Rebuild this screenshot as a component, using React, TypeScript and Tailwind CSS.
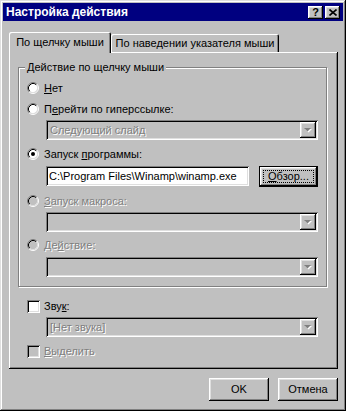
import React from 'react';

const RAISED =
  'shadow-[inset_-1px_-1px_0_#000,inset_1px_1px_0_#fff,inset_-2px_-2px_0_#808080,inset_2px_2px_0_#dfdfdf]';
const SUNKEN =
  'shadow-[inset_1px_1px_0_#808080,inset_-1px_-1px_0_#fff,inset_2px_2px_0_#000,inset_-2px_-2px_0_#dfdfdf]';
const DISABLED_TEXT = 'text-[#808080] [text-shadow:1px_1px_0_#fff]';

function Radio({ checked = false, disabled = false }: { checked?: boolean; disabled?: boolean }) {
  return (
    <svg width="12" height="12" viewBox="0 0 12 12" className="shrink-0">
      <circle cx="6" cy="6" r="4.5" fill={disabled ? '#c0c0c0' : '#fff'} />
      <path d="M2.11 9.89 A5.5 5.5 0 0 1 9.89 2.11" fill="none" stroke="#808080" />
      <path d="M9.89 2.11 A5.5 5.5 0 0 1 2.11 9.89" fill="none" stroke="#fff" />
      <path d="M2.82 9.18 A4.5 4.5 0 0 1 9.18 2.82" fill="none" stroke="#000" />
      <path d="M9.18 2.82 A4.5 4.5 0 0 1 2.82 9.18" fill="none" stroke="#dfdfdf" />
      {checked && <circle cx="6" cy="6" r="2" fill="#000" />}
    </svg>
  );
}

function Check({ disabled = false }: { disabled?: boolean }) {
  return <div className={`w-[13px] h-[13px] shrink-0 ${SUNKEN} ${disabled ? 'bg-[#c0c0c0]' : 'bg-white'}`} />;
}

function Arrow() {
  return (
    <svg width="8" height="5" viewBox="0 0 8 5">
      <polygon points="1,1 8,1 4.5,4.5" fill="#fff" />
      <polygon points="0,0 7,0 3.5,3.5" fill="#808080" />
    </svg>
  );
}

function Combo({ text, className = '' }: { text?: string; className?: string }) {
  return (
    <div className={`h-[20px] w-[272px] bg-[#c0c0c0] ${SUNKEN} flex items-center p-[2px] ${className}`}>
      <span className={`flex-1 pl-[2px] ${DISABLED_TEXT}`}>{text}</span>
      <div className={`w-[16px] h-[16px] bg-[#c0c0c0] ${RAISED} flex items-center justify-center`}>
        <Arrow />
      </div>
    </div>
  );
}

function Option({
  children,
  checked,
  disabled,
  className = '',
}: {
  children: React.ReactNode;
  checked?: boolean;
  disabled?: boolean;
  className?: string;
}) {
  return (
    <div className={`h-[16px] flex items-center gap-[5px] ${className}`}>
      <Radio checked={checked} disabled={disabled} />
      <span className={disabled ? DISABLED_TEXT : ''}>{children}</span>
    </div>
  );
}

export default function App() {
  return (
    <div
      className={`w-[346px] h-[411px] bg-[#c0c0c0] p-[3px] flex flex-col font-['Liberation_Sans',Arial,sans-serif] text-[11px] leading-[13px] text-black shadow-[inset_-1px_-1px_0_#000,inset_1px_1px_0_#dfdfdf,inset_-2px_-2px_0_#808080,inset_2px_2px_0_#fff]`}
    >
      {/* Title bar */}
      <div className="h-[18px] bg-[#000080] flex items-center pl-[3px] pr-[3px]">
        <span className="flex-1 text-white font-bold text-[12px]">Настройка действия</span>
        <div className={`w-[15px] h-[13px] bg-[#c0c0c0] ${RAISED} flex items-center justify-center font-bold text-[11px] leading-none`}>
          ?
        </div>
        <div className={`ml-[2px] w-[15px] h-[13px] bg-[#c0c0c0] ${RAISED} flex items-center justify-center`}>
          <svg width="8" height="7" viewBox="0 0 8 7">
            <path d="M0.5 0.5 L7.5 6.5 M7.5 0.5 L0.5 6.5" stroke="#000" strokeWidth="1.6" />
          </svg>
        </div>
      </div>

      {/* Tabs */}
      <div className="mt-[11px] ml-[6px] h-[21px] flex items-end">
        <div className="relative z-10 h-[21px] w-[102px] bg-[#c0c0c0] rounded-t-[2px] flex items-center justify-center pb-[1px] shadow-[inset_1px_1px_0_#fff,inset_-1px_0_0_#000,inset_-2px_0_0_#808080]">
          По щелчку мыши
        </div>
        <div className="h-[19px] w-[168px] bg-[#c0c0c0] rounded-t-[2px] flex items-center justify-center shadow-[inset_1px_1px_0_#fff,inset_-1px_0_0_#000,inset_-2px_0_0_#808080]">
          По наведении указателя мыши
        </div>
      </div>

      {/* Page */}
      <div className="-mt-[1px] ml-[6px] w-[329px] h-[317px] pt-[9px] shadow-[inset_-1px_-1px_0_#000,inset_1px_1px_0_#fff,inset_-2px_-2px_0_#808080]">
        <fieldset className="ml-[9px] w-[309px] border border-[#808080] px-[8px] pb-[9px] shadow-[1px_1px_0_#fff,inset_1px_1px_0_#fff]">
          <legend className="-ml-[2px] px-[2px] bg-[#c0c0c0] leading-[13px]">Действие по щелчку мыши</legend>

          <Option className="mt-[6px]">
            <u>Н</u>ет
          </Option>
          <Option className="mt-[5px]">
            П<u>е</u>рейти по гиперссылке:
          </Option>
          <Combo text="Следующий слайд" className="mt-[3px] ml-[19px]" />

          <Option checked className="mt-[6px]">
            Запуск <u>п</u>рограммы:
          </Option>
          <div className="mt-[4px] ml-[19px] flex items-start gap-[10px]">
            <div className={`h-[20px] w-[203px] bg-white ${SUNKEN} flex items-center pl-[3px] whitespace-nowrap overflow-hidden`}>
              {'C:\\Program Files\\Winamp\\winamp.exe'}
            </div>
            <div className="h-[21px] w-[59px] border border-black">
              <div className={`h-full w-full ${RAISED} p-[3px]`}>
                <div className="h-full w-full border border-dotted border-black flex items-center justify-center">
                  <span>
                    <u>О</u>бзор...
                  </span>
                </div>
              </div>
            </div>
          </div>

          <Option disabled className="mt-[6px]">
            <u>З</u>апуск макроса:
          </Option>
          <Combo className="mt-[3px] ml-[19px]" />

          <Option disabled className="mt-[5px]">
            Де<u>й</u>ствие:
          </Option>
          <Combo className="mt-[4px] ml-[19px]" />
        </fieldset>

        <div className="mt-[11px] ml-[18px] h-[16px] flex items-center gap-[4px]">
          <Check />
          <span>
            Зву<u>к</u>:
          </span>
        </div>
        <Combo text="[Нет звука]" className="mt-[3px] ml-[37px]" />
        <div className="mt-[6px] ml-[18px] h-[16px] flex items-center gap-[4px]">
          <Check disabled />
          <span className={DISABLED_TEXT}>
            <u>В</u>ыделить
          </span>
        </div>
      </div>

      {/* Buttons */}
      <div className="mt-[9px] pr-[5px] flex justify-end gap-[9px]">
        <div className={`w-[60px] h-[23px] ${RAISED} flex items-center justify-center`}>OK</div>
        <div className={`w-[60px] h-[23px] ${RAISED} flex items-center justify-center`}>Отмена</div>
      </div>
    </div>
  );
}
